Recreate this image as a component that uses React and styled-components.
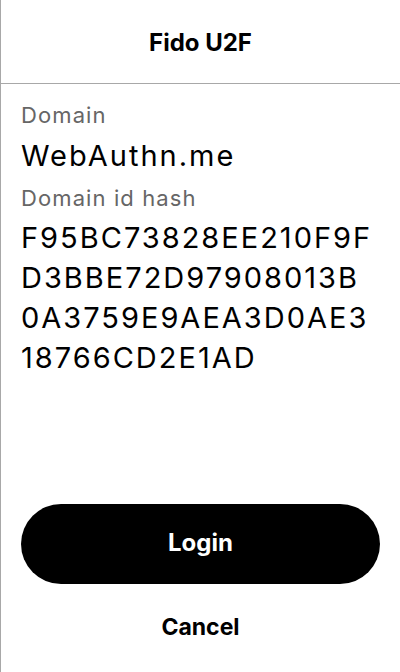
import styled, { createGlobalStyle } from "styled-components"

const Global = createGlobalStyle`
  html, body {
    margin: 0;
    padding: 0;
    background: #fff;
  }
  body {
    font-family: Inter, "Noto Sans", sans-serif;
    color: #000;
  }
`

const Screen = styled.div`
  width: 400px;
  height: 672px;
  box-sizing: border-box;
  border-left: 1px solid #a8a8a8;
  display: flex;
  flex-direction: column;
  overflow: hidden;
`

const Header = styled.header`
  height: 84px;
  flex-shrink: 0;
  border-bottom: 1px solid #a8a8a8;
  display: flex;
  align-items: center;
  justify-content: center;
  padding-top: 2px;
  box-sizing: border-box;
`

const Title = styled.h1`
  margin: 0;
  font-size: 24px;
  font-weight: 700;
`

const Body = styled.main`
  flex: 1;
  padding: 17px 20px 0 20px;
  display: flex;
  flex-direction: column;
`

const Label = styled.div`
  font-size: 22px;
  line-height: 28px;
  letter-spacing: 1.1px;
  color: #666;
`

const Value = styled.div`
  font-size: 29px;
  line-height: 36px;
  letter-spacing: 2px;
  margin: 9px 0 10px;
`

const Hash = styled.div`
  margin-top: 6px;
  font-size: 29px;
  line-height: 40px;
  letter-spacing: 2px;
`

const HashLine = styled.div`
  white-space: nowrap;
`

const Footer = styled.footer`
  display: flex;
  flex-direction: column;
  padding: 0 20px;
`

const LoginButton = styled.button`
  height: 80px;
  border: none;
  border-radius: 40px;
  background: #000;
  color: #fff;
  padding: 0 0 4px;
  font-family: inherit;
  font-size: 24px;
  font-weight: 700;
  cursor: pointer;
`

const CancelButton = styled.button`
  height: 88px;
  border: none;
  background: none;
  color: #000;
  padding: 0 0 2px;
  font-family: inherit;
  font-size: 23px;
  font-weight: 700;
  cursor: pointer;
`

const hashLines = ["F95BC73828EE210F9F", "D3BBE72D97908013B", "0A3759E9AEA3D0AE3", "18766CD2E1AD"]

const App = () => {
  return (
    <Screen>
      <Global />
      <Header>
        <Title>Fido U2F</Title>
      </Header>
      <Body>
        <Label>Domain</Label>
        <Value>WebAuthn.me</Value>
        <Label>Domain id hash</Label>
        <Hash>
          {hashLines.map((line) => (
            <HashLine key={line}>{line}</HashLine>
          ))}
        </Hash>
      </Body>
      <Footer>
        <LoginButton>Login</LoginButton>
        <CancelButton>Cancel</CancelButton>
      </Footer>
    </Screen>
  )
}

export default App
